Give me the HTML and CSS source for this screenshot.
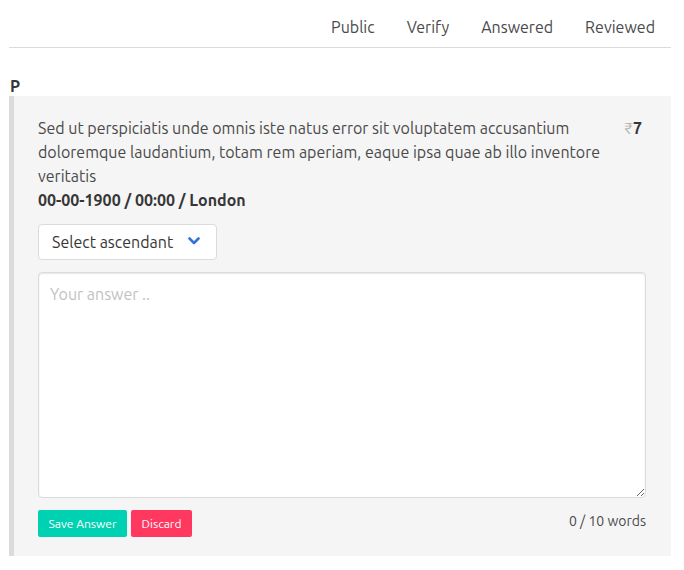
FILE: index.html
```html
<!DOCTYPE html>
<html>
<head>
<meta charset="utf-8">
<link rel="stylesheet" href="styles.css">
</head>
<body>
<div class="page">
  <nav class="tabs">
    <a class="tab">Public</a>
    <a class="tab">Verify</a>
    <a class="tab">Answered</a>
    <a class="tab">Reviewed</a>
  </nav>
  <div class="label">P</div>
  <div class="card">
    <div class="head">
      <div class="question">
        <p>Sed ut perspiciatis unde omnis iste natus error sit voluptatem accusantium doloremque laudantium, totam rem aperiam, eaque ipsa quae ab illo inventore veritatis</p>
        <p class="meta">00-00-1900 / 00:00 / London</p>
      </div>
      <div class="price"><span class="cur">₹</span>7</div>
    </div>
    <div class="select">
      <span>Select ascendant</span>
      <svg class="chev" width="12" height="8" viewBox="0 0 12 8"><path d="M1.5 1.5 L6 6 L10.5 1.5" fill="none" stroke="#3273dc" stroke-width="2.6" stroke-linecap="round" stroke-linejoin="round"/></svg>
    </div>
    <textarea class="answer" placeholder="Your answer .."></textarea>
    <div class="foot">
      <div class="btns">
        <button class="btn save">Save Answer</button>
        <button class="btn discard">Discard</button>
      </div>
      <div class="count">0 / 10 words</div>
    </div>
  </div>
</div>
</body>
</html>
```
FILE: styles.css
```css
* { box-sizing: border-box; }
body {
  margin: 0;
  background: #fff;
  font-family: "Ubuntu", "Open Sans", "Noto Sans", sans-serif;
  color: #4a4a4a;
  font-size: 16px;
}
.page {
  padding: 0 13px 0 9px;
}
.tabs {
  display: flex;
  justify-content: flex-end;
  align-items: flex-end;
  border-bottom: 1px solid #dbdbdb;
  height: 48px;
  padding-bottom: 8px;
}
.tab {
  padding: 0 16px;
  line-height: 24px;
  font-size: 16px;
  color: #4a4a4a;
}
.label {
  font-weight: 700;
  font-size: 16px;
  margin: 28px 0 0 1px;
  line-height: 20px;
  color: #363636;
}
.card {
  background: #f5f5f5;
  border-left: 5px solid #dbdbdb;
  padding: 20px 25px 20px 24px;
  height: 460px;
}
.head {
  display: flex;
  justify-content: space-between;
}
.question p {
  margin: 0;
  line-height: 24px;
  max-width: 590px;
}
.question .meta {
  font-weight: 700;
  color: #363636;
}
.price {
  font-weight: 700;
  color: #363636;
  font-size: 16px;
  line-height: 24px;
  padding-right: 4px;
}
.cur {
  color: #b5b5b5;
  font-weight: 400;
}
.select {
  margin-top: 12px;
  width: 179px;
  height: 36px;
  background: #fff;
  border: 1px solid #dbdbdb;
  border-radius: 4px;
  display: flex;
  align-items: center;
  justify-content: space-between;
  padding: 0 16px 0 13px;
  color: #363636;
}
.chev { margin-top: -2px; }
.answer {
  display: block;
  margin-top: 12px;
  width: 100%;
  height: 226px;
  border: 1px solid #dbdbdb;
  border-radius: 4px;
  background: #fff;
  padding: 12px 11px;
  font-family: inherit;
  font-size: 16px;
  resize: vertical;
  box-shadow: inset 0 1px 2px rgba(10,10,10,.1);
}
.answer::placeholder { color: #c2c2c2; }
.foot {
  margin-top: 12px;
  display: flex;
  justify-content: space-between;
  align-items: flex-start;
}
.btns { display: flex; gap: 4px; }
.btn {
  border: none;
  border-radius: 2px;
  height: 27px;
  color: #fff;
  font-family: inherit;
  font-size: 12px;
  padding: 0 10px;
}
.save { background: #00d1b2; width: 89px; }
.discard { background: #ff3860; width: 61px; }
.count {
  font-size: 14px;
  line-height: 22px;
  color: #4a4a4a;
}
```
